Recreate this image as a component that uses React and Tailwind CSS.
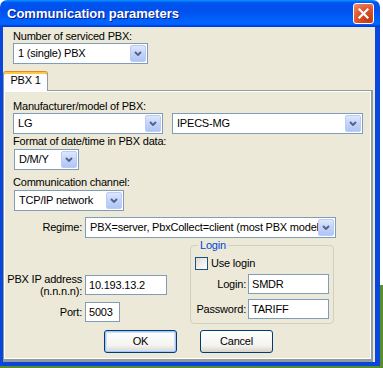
const font = "font-['Liberation_Sans',Arial,sans-serif]";

function Chevron() {
  return (
    <svg width="8" height="5" viewBox="0 0 8 5">
      <path d="M1 1 L4 4 L7 1" fill="none" stroke="#4D6185" strokeWidth="1.8" />
    </svg>
  );
}

function Combo({ value, className }) {
  return (
    <div className={`flex h-[21px] shrink-0 items-center border border-[#7F9DB9] bg-white p-[1px] ${className}`}>
      <span className="min-w-0 flex-1 overflow-hidden whitespace-nowrap pl-[3px] leading-[13px]">{value}</span>
      <span className="flex h-full w-[16px] shrink-0 items-center justify-center rounded-[2px] border border-[#BACCF6] bg-[linear-gradient(180deg,#dde7fd,#c3d3fa_50%,#b1c5f5)]">
        <Chevron />
      </span>
    </div>
  );
}

function Field({ value, className }) {
  return (
    <div className={`flex h-[20px] shrink-0 items-center border border-[#7F9DB9] bg-white pl-[3px] leading-[13px] ${className}`}>
      {value}
    </div>
  );
}

function XpButton({ label, focused }) {
  return (
    <div
      className={`flex h-[23px] w-[73px] items-center justify-center rounded-[3px] border border-[#003C74] bg-[linear-gradient(180deg,#ffffff,#f3f3ef_70%,#d8d3c8)] leading-[13px] ${
        focused ? 'shadow-[inset_0_0_0_1px_#a9c6f6,inset_0_0_0_2px_#cfe0fb]' : ''
      }`}
    >
      {label}
    </div>
  );
}

export default function App() {
  return (
    <div className={`flex h-[368px] w-[383px] flex-col overflow-hidden bg-white text-[11px] tracking-[-0.2px] text-black ${font}`}>
      <div className="flex h-[366px]">
        <div className="flex w-[380px] flex-col">
          {/* title bar */}
          <div className="flex h-[27px] items-center rounded-t-[7px] bg-[linear-gradient(180deg,#0997ff_0%,#0053ee_10%,#0050ee_40%,#0066ff_85%,#005bff_92%,#003dd7_96%,#003dd7_100%)] pl-[7px] pr-[6px]">
            <span className="flex-1 text-[13px] font-bold tracking-normal text-white [text-shadow:1px_1px_#0a1883]">
              Communication parameters
            </span>
            <div className="flex h-[21px] w-[21px] items-center justify-center rounded-[3px] border border-white bg-[radial-gradient(circle_at_75%_85%,#c23a10,#e0572f_55%,#f09070)]">
              <svg width="13" height="13" viewBox="0 0 13 13">
                <path d="M2.5 2.5L10.5 10.5M10.5 2.5L2.5 10.5" stroke="white" strokeWidth="2.2" strokeLinecap="square" />
              </svg>
            </div>
          </div>

          {/* dialog body */}
          <div className="flex flex-1 flex-col border-b-[4px] border-l-[3px] border-r-[5px] border-[#0A46DC] bg-[#ECE9D8]">
            <div className="pl-[10px] pt-[3px]">
              <p className="leading-[13px]">Number of serviced PBX:</p>
              <Combo value="1 (single) PBX" className="w-[135px]" />
            </div>

            <div className="mt-[7px] flex">
              <div className="relative z-10 -mb-[1px] h-[20px] w-[45px] rounded-t-[3px] border-x border-t border-[#919B9C] border-t-[#E68B2C] bg-[#FCFCFE] pt-[2px] text-center leading-[13px] shadow-[inset_0_2px_0_#FFC83C]">
                PBX 1
              </div>
            </div>

            <div className="mr-[2px] flex flex-1 flex-col border-b-[3px] border-l border-r-2 border-t border-[#919B9C] pl-[9px] pt-[9px] shadow-[inset_1px_1px_0_#fff,inset_-1px_-1px_0_#fff]">
              <p className="leading-[13px]">Manufacturer/model of PBX:</p>
              <div className="flex gap-[9px]">
                <Combo value="LG" className="w-[150px]" />
                <Combo value="IPECS-MG" className="w-[191px]" />
              </div>

              <p className="mt-[1px] leading-[13px]">Format of date/time in PBX data:</p>
              <Combo value="D/M/Y" className="ml-[1px] mt-[1px] w-[65px]" />

              <p className="mt-[6px] leading-[13px]">Communication channel:</p>
              <Combo value="TCP/IP network" className="ml-[1px] mt-[1px] w-[110px]" />

              <div className="mt-[6px] flex items-center">
                <span className="mr-[3px] w-[69px] text-right leading-[13px]">Regime:</span>
                <Combo value="PBX=server, PbxCollect=client (most PBX model" className="w-[251px]" />
              </div>

              <div className="flex items-start">
                <div className="mt-[35px] flex flex-col gap-[5px]">
                  <div className="flex items-center">
                    <div className="mr-[3px] flex w-[69px] flex-col items-end whitespace-nowrap leading-[12px]">
                      <span>PBX IP address</span>
                      <span>(n.n.n.n):</span>
                    </div>
                    <Field value="10.193.13.2" className="w-[82px]" />
                  </div>
                  <div className="flex items-center">
                    <span className="mr-[3px] w-[69px] text-right leading-[13px]">Port:</span>
                    <Field value="5003" className="w-[35px]" />
                  </div>
                </div>

                <div className="ml-[23px] mt-[7px] flex w-[144px] flex-col rounded-[4px] border border-[#D0D0BF] pb-[4px]">
                  <span className="-mt-[7px] ml-[7px] w-fit bg-[#ECE9D8] px-[2px] leading-[13px] text-[#0046D5]">Login</span>
                  <div className="ml-[4px] mt-[5px] flex items-center gap-[3px]">
                    <span className="h-[13px] w-[13px] border border-[#1C5180] bg-[linear-gradient(135deg,#dcdcd7,#ffffff)]" />
                    <span className="leading-[13px]">Use login</span>
                  </div>
                  <div className="mt-[4px] flex items-center">
                    <span className="mr-[2px] w-[55px] text-right leading-[13px]">Login:</span>
                    <Field value="SMDR" className="w-[81px]" />
                  </div>
                  <div className="mt-[5px] flex items-center">
                    <span className="mr-[2px] w-[55px] text-right leading-[13px]">Password:</span>
                    <Field value="TARIFF" className="w-[81px]" />
                  </div>
                </div>
              </div>

              <div className="ml-[91px] mt-[6px] flex gap-[23px]">
                <XpButton label="OK" focused />
                <XpButton label="Cancel" />
              </div>
            </div>
          </div>
        </div>

        {/* desktop behind the window */}
        <div className="flex flex-1 flex-col">
          <div className="h-[285px] bg-white" />
          <div className="flex-1 bg-[#5A8D2E]" />
        </div>
      </div>
      <div className="flex-1 bg-[#5A8D2E]" />
    </div>
  );
}
